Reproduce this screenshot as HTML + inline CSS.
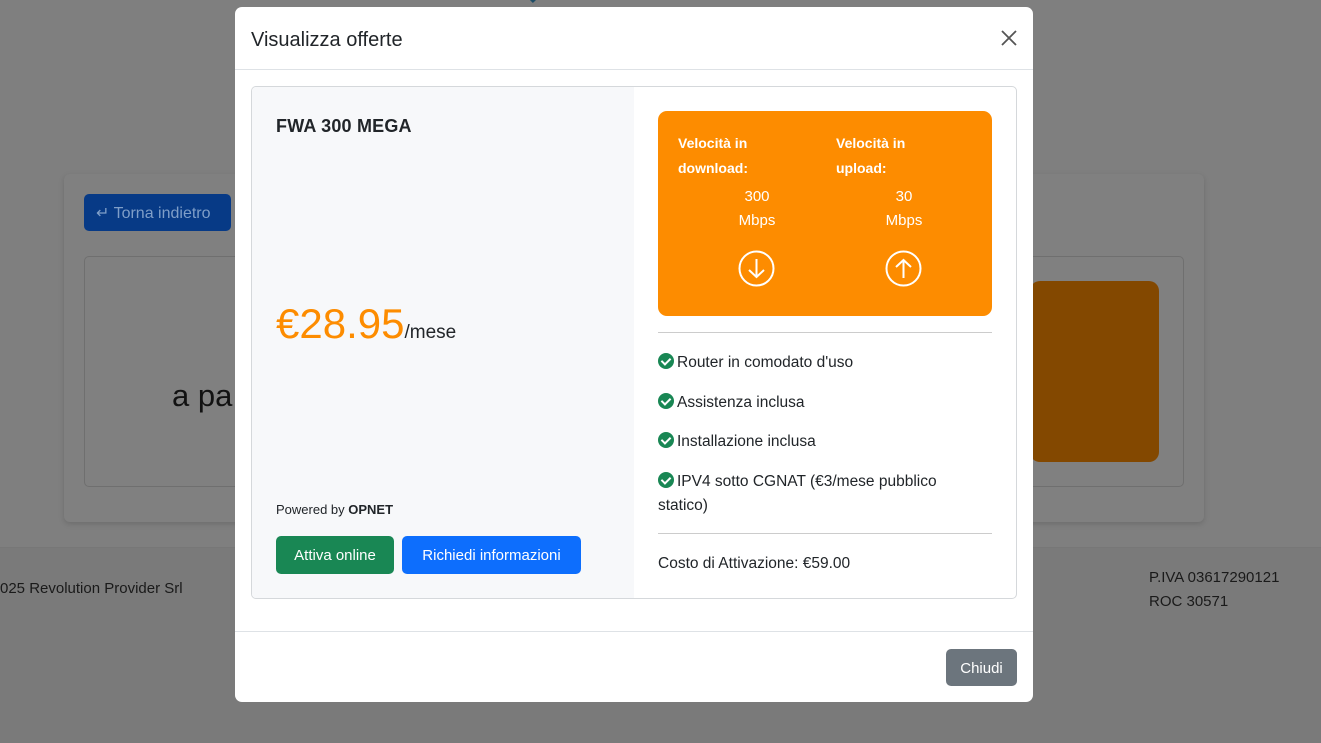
<!DOCTYPE html>
<html><head><meta charset="utf-8"><style>
*{box-sizing:border-box;margin:0;padding:0}
body{width:1321px;height:743px;overflow:hidden;background:#7f7f7f;font-family:"Liberation Sans",sans-serif;position:relative;color:#212529}
.abs{position:absolute}
.ck{display:inline-block;width:16px;height:16px;border-radius:50%;background:#198754;vertical-align:-2px;margin-right:3px;position:relative}
.ck:after{content:"";position:absolute;left:5px;top:3px;width:4px;height:7px;border:solid #fff;border-width:0 2px 2px 0;transform:rotate(45deg)}
</style></head><body>
<div class="abs" style="left:0;top:547px;width:1321px;height:196px;background:#7a7a7a;border-top:1px solid #777"></div>
<div class="abs" style="left:480px;top:-30px;width:60px;height:40px;border-radius:50%;border:8px solid #1e4d66;border-left-color:transparent;border-bottom-color:transparent"></div>
<div class="abs" style="left:64px;top:174px;width:1140px;height:348px;background:#808080;border-radius:6px;box-shadow:0 2px 6px rgba(0,0,0,.15)"></div>
<div class="abs" style="left:84px;top:194px;width:147px;height:37px;background:#073a86;border-radius:5px;color:#7f9ec8;font-size:16px;line-height:39px;padding-left:12px">↵ Torna indietro</div>
<div class="abs" style="left:84px;top:256px;width:1100px;height:231px;border:1px solid #6f6f6f;border-radius:5px"></div>
<div class="abs" style="left:1030px;top:281px;width:129px;height:181px;background:#834800;border-radius:10px"></div>
<div class="abs" style="left:172px;top:378px;font-size:31px;color:#121212">a pa</div>
<div class="abs" style="left:0;top:580px;font-size:15px;color:#1a1a1a">025 Revolution Provider Srl</div>
<div class="abs" style="left:1149px;top:566px;font-size:15px;line-height:24px;color:#1a1a1a">P.IVA 03617290121<br>ROC 30571</div>

<div class="abs" style="left:235px;top:7px;width:798px;height:695px;background:#fff;border-radius:7px">
 <div style="height:63px;border-bottom:1px solid #dee2e6;padding:21px 16px;font-size:20px;line-height:24px">Visualizza offerte</div>
 <svg class="abs" style="left:766px;top:23px" width="16" height="16" viewBox="0 0 16 16"><path d="M1 1L15 15M15 1L1 15" stroke="#555" stroke-width="1.8"/></svg>
 <div class="abs" style="left:16px;top:79px;width:766px;height:513px;border:1px solid #d5d8db;border-radius:5px;overflow:hidden">
  <div class="abs" style="left:0;top:0;width:382px;height:513px;background:#f7f8fa">
   <div class="abs" style="left:24px;top:29px;font-size:18px;font-weight:bold;letter-spacing:.2px">FWA 300 MEGA</div>
   <div class="abs" style="left:24px;top:213px;font-size:42px;color:#fd8c00;white-space:nowrap">€28.95<span style="font-size:19px;color:#212529">/mese</span></div>
   <div class="abs" style="left:24px;top:415px;font-size:13px">Powered by <b>OPNET</b></div>
   <div class="abs" style="left:24px;top:449px;width:118px;height:38px;background:#198754;border-radius:5px;color:#fff;font-size:15px;line-height:40px;text-align:center">Attiva online</div>
   <div class="abs" style="left:150px;top:449px;width:179px;height:38px;background:#0d6efd;border-radius:5px;color:#fff;font-size:15px;line-height:40px;text-align:center">Richiedi informazioni</div>
  </div>
  <div class="abs" style="left:406px;top:24px;width:334px;height:205px;background:#fd8c00;border-radius:9px;color:#fff">
   <div class="abs" style="left:20px;top:20px;font-size:14px;font-weight:bold;line-height:25px">Velocità in<br>download:</div>
   <div class="abs" style="left:178px;top:20px;font-size:14px;font-weight:bold;line-height:25px">Velocità in<br>upload:</div>
   <div class="abs" style="left:59px;top:74px;width:80px;text-align:center;font-size:15px;line-height:24px">300<br>Mbps</div>
   <div class="abs" style="left:206px;top:74px;width:80px;text-align:center;font-size:15px;line-height:24px">30<br>Mbps</div>
   <svg class="abs" style="left:80px;top:139px" width="37" height="37" viewBox="0 0 37 37"><circle cx="18.5" cy="18.5" r="17" fill="none" stroke="#fff" stroke-width="2"/><path d="M18.5 9V27M11 20L18.5 27L26 20" fill="none" stroke="#fff" stroke-width="2"/></svg>
   <svg class="abs" style="left:227px;top:139px" width="37" height="37" viewBox="0 0 37 37"><circle cx="18.5" cy="18.5" r="17" fill="none" stroke="#fff" stroke-width="2"/><path d="M18.5 28V10M11 17L18.5 10L26 17" fill="none" stroke="#fff" stroke-width="2"/></svg>
  </div>
  <div class="abs" style="left:406px;top:245px;width:334px;border-top:1px solid #ccc"></div>
  <div class="abs" style="left:406px;top:264px;width:300px;font-size:15.5px;line-height:24.5px">
   <div style="margin-bottom:15px"><span class="ck"></span>Router in comodato d'uso</div>
   <div style="margin-bottom:15px"><span class="ck"></span>Assistenza inclusa</div>
   <div style="margin-bottom:15px"><span class="ck"></span>Installazione inclusa</div>
   <div><span class="ck"></span>IPV4 sotto CGNAT (€3/mese pubblico statico)</div>
  </div>
  <div class="abs" style="left:406px;top:446px;width:334px;border-top:1px solid #ccc"></div>
  <div class="abs" style="left:406px;top:465px;font-size:15.5px;line-height:24px">Costo di Attivazione: €59.00</div>
 </div>
 <div class="abs" style="left:0;top:624px;width:798px;border-top:1px solid #dee2e6"></div>
 <div class="abs" style="left:711px;top:642px;width:71px;height:37px;background:#6c757d;border-radius:5px;color:#fff;font-size:15px;line-height:39px;text-align:center">Chiudi</div>
</div>
</body></html>
